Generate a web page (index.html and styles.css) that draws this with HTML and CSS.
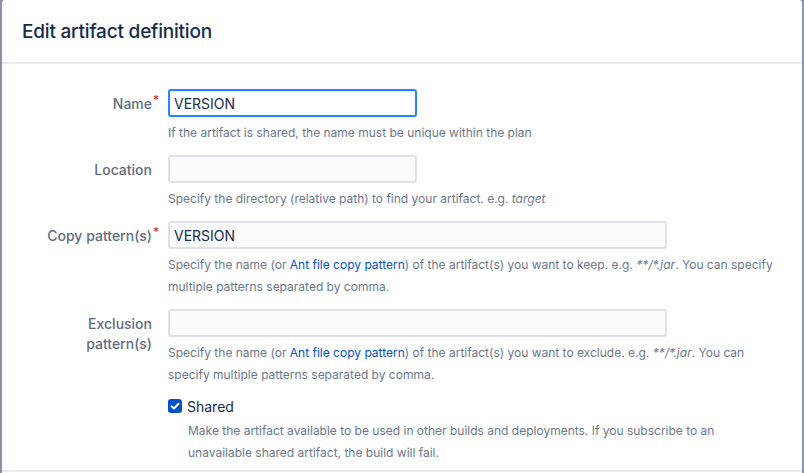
FILE: index.html
```html
<!DOCTYPE html>
<html>
<head>
<meta charset="utf-8">
<link rel="stylesheet" href="styles.css">
</head>
<body>
<div class="dialog">
  <header class="dialog-header">
    <h1 class="dialog-title">Edit artifact definition</h1>
  </header>
  <form class="dialog-body">
    <div class="field">
      <label class="label">Name<span class="req">*</span></label>
      <div class="control">
        <input class="text short focus" type="text" value="VERSION">
        <div class="help">If the artifact is shared, the name must be unique within the plan</div>
      </div>
    </div>
    <div class="field">
      <label class="label">Location</label>
      <div class="control">
        <input class="text short" type="text" value="">
        <div class="help">Specify the directory (relative path) to find your artifact. e.g. <em>target</em></div>
      </div>
    </div>
    <div class="field">
      <label class="label">Copy pattern(s)<span class="req">*</span></label>
      <div class="control">
        <input class="text long" type="text" value="VERSION">
        <div class="help">Specify the name (or <a href="#">Ant file copy pattern</a>) of the artifact(s) you want to keep. e.g. <em>**/*.jar</em>. You can specify multiple patterns separated by comma.</div>
      </div>
    </div>
    <div class="field">
      <label class="label">Exclusion pattern(s)</label>
      <div class="control">
        <input class="text long" type="text" value="">
        <div class="help narrow">Specify the name (or <a href="#">Ant file copy pattern</a>) of the artifact(s) you want to exclude. e.g. <em>**/*.jar</em>. You can specify multiple patterns separated by comma.</div>
      </div>
    </div>
    <div class="field">
      <span class="label"></span>
      <div class="control">
        <div class="check-row">
          <span class="checkbox"><svg viewBox="0 0 14 14" width="14" height="14"><path d="M3.6 7.2 L6 9.5 L10.5 4.7" fill="none" stroke="#fff" stroke-width="2" stroke-linecap="round" stroke-linejoin="round"/></svg></span>
          <span class="check-label">Shared</span>
        </div>
        <div class="help indent">Make the artifact available to be used in other builds and deployments. If you subscribe to an unavailable shared artifact, the build will fail.</div>
      </div>
    </div>
  </form>
  <footer class="dialog-footer"></footer>
</div>
</body>
</html>
```

FILE: styles.css
```css
html, body {
  margin: 0;
  padding: 0;
}
body {
  background: #8993a4;
  font-family: Inter, "Noto Sans", "Liberation Sans", sans-serif;
  color: #172b4d;
  width: 804px;
  height: 473px;
  overflow: hidden;
}
.dialog {
  margin: 0 2px;
  background: #fff;
  border-radius: 3px 3px 0 0;
  height: 473px;
}
.dialog-header {
  box-sizing: border-box;
  height: 64px;
  border-bottom: 2px solid #ebecf0;
  display: flex;
  align-items: center;
  padding: 1px 0 0 20px;
}
.dialog-title {
  margin: 0;
  font-size: 19px;
  font-weight: 500;
  color: #172b4d;
  letter-spacing: -0.2px;
}
.dialog-body {
  box-sizing: border-box;
  padding: 25px 0 0 25px;
  display: flex;
  flex-direction: column;
  gap: 11px;
  height: 406px;
}
.field {
  display: grid;
  grid-template-columns: 125px 1fr;
  column-gap: 16px;
}
.label {
  text-align: right;
  font-size: 14px;
  font-weight: 500;
  line-height: 20px;
  color: #5e6c84;
  padding-top: 5px;
  position: relative;
}
.req {
  position: absolute;
  color: #de350b;
  font-size: 12px;
  line-height: 12px;
  margin-left: 1px;
  top: 5px;
}
.control {
  display: flex;
  flex-direction: column;
  align-items: flex-start;
}
.text {
  box-sizing: border-box;
  height: 28px;
  border: 2px solid #dfe1e6;
  border-radius: 3px;
  background: #fafbfc;
  font-family: inherit;
  font-size: 14px;
  color: #172b4d;
  padding: 0 4px;
  outline: none;
  margin: 0;
}
.text.focus {
  background: #fff;
  border-color: #2684ff;
}
.short { width: 249px; }
.long { width: 499px; }
.help {
  margin-top: 5px;
  font-size: 12px;
  line-height: 22px;
  color: #6b778c;
  max-width: 630px;
}
.help.narrow {
  max-width: 600px;
}
.help a {
  color: #0052cc;
  text-decoration: none;
}
.help.indent {
  padding-left: 20px;
  max-width: 550px;
}
.check-row {
  display: flex;
  align-items: center;
  gap: 5px;
  height: 18px;
}
.checkbox {
  width: 14px;
  height: 14px;
  border-radius: 3px;
  background: #0052cc;
  display: flex;
}
.check-label {
  font-size: 14px;
  color: #172b4d;
}
.dialog-footer {
  border-top: 2px solid #ebecf0;
}
```
